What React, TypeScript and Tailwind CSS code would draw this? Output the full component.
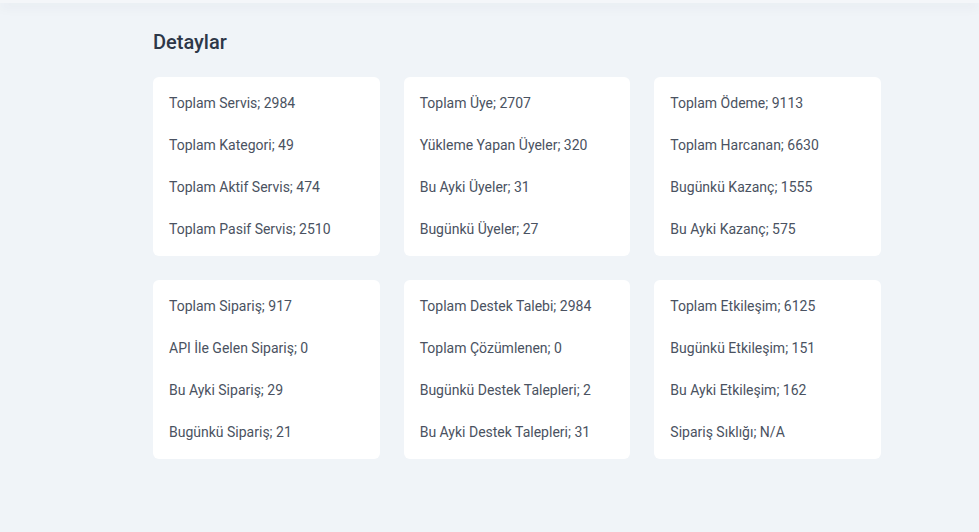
import React from "react";

const groups: string[][] = [
  ["Toplam Servis; 2984", "Toplam Kategori; 49", "Toplam Aktif Servis; 474", "Toplam Pasif Servis; 2510"],
  ["Toplam Üye; 2707", "Yükleme Yapan Üyeler; 320", "Bu Ayki Üyeler; 31", "Bugünkü Üyeler; 27"],
  ["Toplam Ödeme; 9113", "Toplam Harcanan; 6630", "Bugünkü Kazanç; 1555", "Bu Ayki Kazanç; 575"],
  ["Toplam Sipariş; 917", "API İle Gelen Sipariş; 0", "Bu Ayki Sipariş; 29", "Bugünkü Sipariş; 21"],
  ["Toplam Destek Talebi; 2984", "Toplam Çözümlenen; 0", "Bugünkü Destek Talepleri; 2", "Bu Ayki Destek Talepleri; 31"],
  ["Toplam Etkileşim; 6125", "Bugünkü Etkileşim; 151", "Bu Ayki Etkileşim; 162", "Sipariş Sıklığı; N/A"],
];

export default function App() {
  return (
    <div
      className="min-h-[532px] w-full bg-[#f0f4f8] overflow-hidden"
      style={{ fontFamily: "Roboto, 'Liberation Sans', sans-serif" }}
    >
      <div className="h-[3px] bg-[#f4f6f9] shadow-[0_3px_12px_rgba(30,50,80,0.1)]" />
      <div className="ml-[153px] w-[728px] pt-[27px]">
        <h2 className="text-[20px] leading-[24px] font-medium text-[#2d3748]">Detaylar</h2>
        <div className="mt-[23px] grid grid-cols-3 gap-x-[24px] gap-y-[24px]">
          {groups.map((g, i) => (
            <div key={i} className="bg-white rounded-[6px] px-[16px] pt-[16px] pb-[17px] flex flex-col gap-[22px]">
              {g.map((t) => (
                <div key={t} className="text-[14px] leading-[20px] text-[#4a5261]">
                  {t}
                </div>
              ))}
            </div>
          ))}
        </div>
      </div>
    </div>
  );
}
